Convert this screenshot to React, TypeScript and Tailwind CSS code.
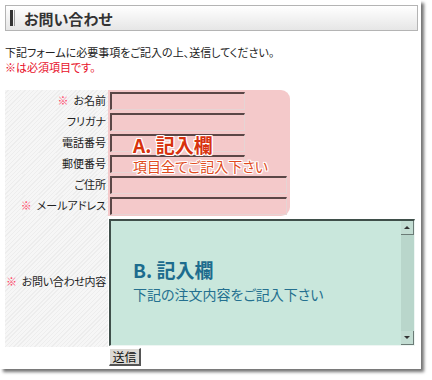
import React from "react";

const jp = "font-['MS_PGothic','Noto_Sans_CJK_JP',sans-serif] [font-feature-settings:'palt']";
const hatch =
  "bg-[repeating-linear-gradient(135deg,#f6f6f6_0px,#f6f6f6_2px,#ededed_2px,#ededed_3px)]";

const fields = [
  { label: "お名前", req: true, wide: false },
  { label: "フリガナ", req: false, wide: false },
  { label: "電話番号", req: false, wide: false },
  { label: "郵便番号", req: false, wide: false },
  { label: "ご住所", req: false, wide: true },
  { label: "メールアドレス", req: true, wide: true },
];

const outline =
  "[text-shadow:1px_1px_0_#fff,-1px_-1px_0_#fff,1px_-1px_0_#fff,-1px_1px_0_#fff,0_1px_0_#fff,0_-1px_0_#fff,1px_0_0_#fff,-1px_0_0_#fff]";

export default function App() {
  return (
    <div className={`w-[432px] h-[380px] bg-white ${jp}`}>
      <div className="w-[421px] h-[369px] bg-white shadow-[3px_3px_3px_rgba(0,0,0,0.55)] pt-[5px] pl-[5px]">
        {/* header */}
        <div className="w-[413px] h-[26px] border border-[#b4b4b4] bg-gradient-to-b from-white to-[#e6e6e6] flex items-center">
          <div className="ml-[4px] flex gap-[1px] h-[16px]">
            <div className="w-[3px] bg-[#333]" />
            <div className="w-[1px] bg-[#999]" />
          </div>
          <span className="ml-[9px] text-[15px] font-bold text-[#333] leading-none">お問い合わせ</span>
        </div>

        <div className="mt-[13px] text-[11px] leading-[17px] text-[#222]">
          下記フォームに必要事項をご記入の上、送信してください。
        </div>
        <div className="text-[11px] leading-[13px] text-[#e8102a]">※は必須項目です。</div>

        {/* form */}
        <div className="relative mt-[16px] w-[410px]">
          {/* annotation A background */}
          <div className="absolute left-[103px] top-0 w-[182px] h-[126px] bg-[#f4c9ca] rounded-r-[9px]" />

          {fields.map((f) => (
            <div key={f.label} className="relative flex h-[21px]">
              <div className={`w-[103px] ${hatch} flex items-center justify-end pr-[2px] text-[11px] text-[#222] whitespace-nowrap`}>
                {f.req && <span className="text-[#ff4466] mr-[5px]">※</span>}
                {f.label}
              </div>
              <input
                className={`mt-[2px] ml-[2px] h-[18px] ${f.wide ? "w-[177px]" : "w-[135px]"} bg-transparent border-t-2 border-l-2 border-b border-r border-t-[#5a4646] border-l-[#5a4646] border-b-[#e6d4d4] border-r-[#e6d4d4] outline-none`}
              />
            </div>
          ))}

          {/* annotation A text */}
          <div className="absolute left-[128px] top-[45px] pointer-events-none">
            <div className={`text-[19px] font-bold text-[#d8320e] leading-[20px] ${outline}`}>
              A.&nbsp;記入欄
            </div>
            <div className={`text-[14px] text-[#e04a20] leading-[16px] mt-[3px] ${outline}`}>項目全てご記入下さい</div>
          </div>

          {/* textarea row */}
          <div className="flex h-[131px]">
            <div className={`w-[103px] ${hatch} flex items-center justify-end pr-[2px] text-[11px] text-[#222] whitespace-nowrap tracking-[-0.3px]`}>
              <span className="text-[#ff4466] mr-[5px]">※</span>
              お問い合わせ内容
            </div>
            <div className="mt-[3px] ml-[1px] w-[306px] h-[127px] flex bg-[#c9e7dc] border-t-2 border-l-2 border-b border-r border-t-[#3f4f4a] border-l-[#3f4f4a] border-b-[#eef6f3] border-r-[#eef6f3]">
              <div className="flex-1 pl-[22px] pt-[38px]">
                <div className="text-[19px] font-bold text-[#1d6c8e] leading-[22px]">B.&nbsp;記入欄</div>
                <div className="text-[14px] text-[#24708f] leading-[18px] mt-[4px]">下記の注文内容をご記入下さい</div>
              </div>
              <div className="w-[13px] flex flex-col bg-[#b9d6cb]">
                <div className="h-[14px] bg-[#c3ddd3] border-b border-b-[#6b7b76] border-r border-r-[#6b7b76] flex items-center justify-center">
                  <span className="w-0 h-0 border-l-[3px] border-r-[3px] border-b-[3px] border-l-transparent border-r-transparent border-b-[#333]" />
                </div>
                <div className="flex-1" />
                <div className="h-[14px] bg-[#c3ddd3] border-b border-b-[#6b7b76] border-r border-r-[#6b7b76] flex items-center justify-center">
                  <span className="w-0 h-0 border-l-[3px] border-r-[3px] border-t-[3px] border-l-transparent border-r-transparent border-t-[#333]" />
                </div>
              </div>
            </div>
          </div>

          {/* submit */}
          <div className="flex pl-[104px] pt-[1px]">
            <button className="w-[32px] h-[18px] bg-[#dcd9d4] text-[12px] leading-none text-[#111] border-t border-l border-b-2 border-r-2 border-t-white border-l-white border-b-[#555] border-r-[#555]">
              送信
            </button>
          </div>
        </div>
      </div>
    </div>
  );
}
